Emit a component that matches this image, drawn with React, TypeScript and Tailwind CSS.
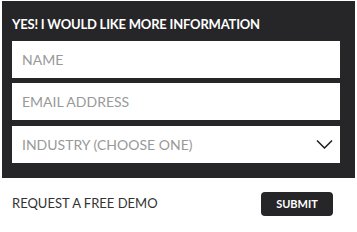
export default function App() {
  return (
    <div className="w-[357px] h-[232px] bg-white font-['Lato',sans-serif]">
      <div className="pt-px pl-[2px] pr-[2px]">
        <form className="bg-[#262628] px-[10px] pt-[15px] pb-[15px]">
          <h3 className="text-[13px] leading-[16px] font-bold text-white tracking-[-0.2px]">
            YES! I WOULD LIKE MORE INFORMATION
          </h3>
          <div className="mt-[9px] flex flex-col gap-[5px] w-[328px]">
            <input
              placeholder="NAME"
              className="h-[37px] bg-white px-[10px] text-[14px] text-gray-700 placeholder:text-[#999] outline-none"
            />
            <input
              placeholder="EMAIL ADDRESS"
              className="h-[37px] bg-white px-[10px] text-[14px] text-gray-700 placeholder:text-[#999] outline-none"
            />
            <div className="h-[37px] bg-white pl-[10px] pr-[7px] flex items-center justify-between mt-px">
              <span className="text-[14px] text-[#999]">INDUSTRY (CHOOSE ONE)</span>
              <svg width="17" height="10" viewBox="0 0 17 10" fill="none" className="mt-[-2px]">
                <path d="M1 1.5 L8.5 9 L16 1.5" stroke="#1e1e1e" strokeWidth="1.5" />
              </svg>
            </div>
          </div>
        </form>
      </div>
      <div className="flex items-center justify-between pl-[12px] pr-[24px] pt-[14px]">
        <span className="text-[13px] text-[#333]">REQUEST A FREE DEMO</span>
        <button className="w-[72px] h-[24px] rounded-[4px] bg-[#262628] text-white text-[11px] font-bold">
          SUBMIT
        </button>
      </div>
    </div>
  )
}
